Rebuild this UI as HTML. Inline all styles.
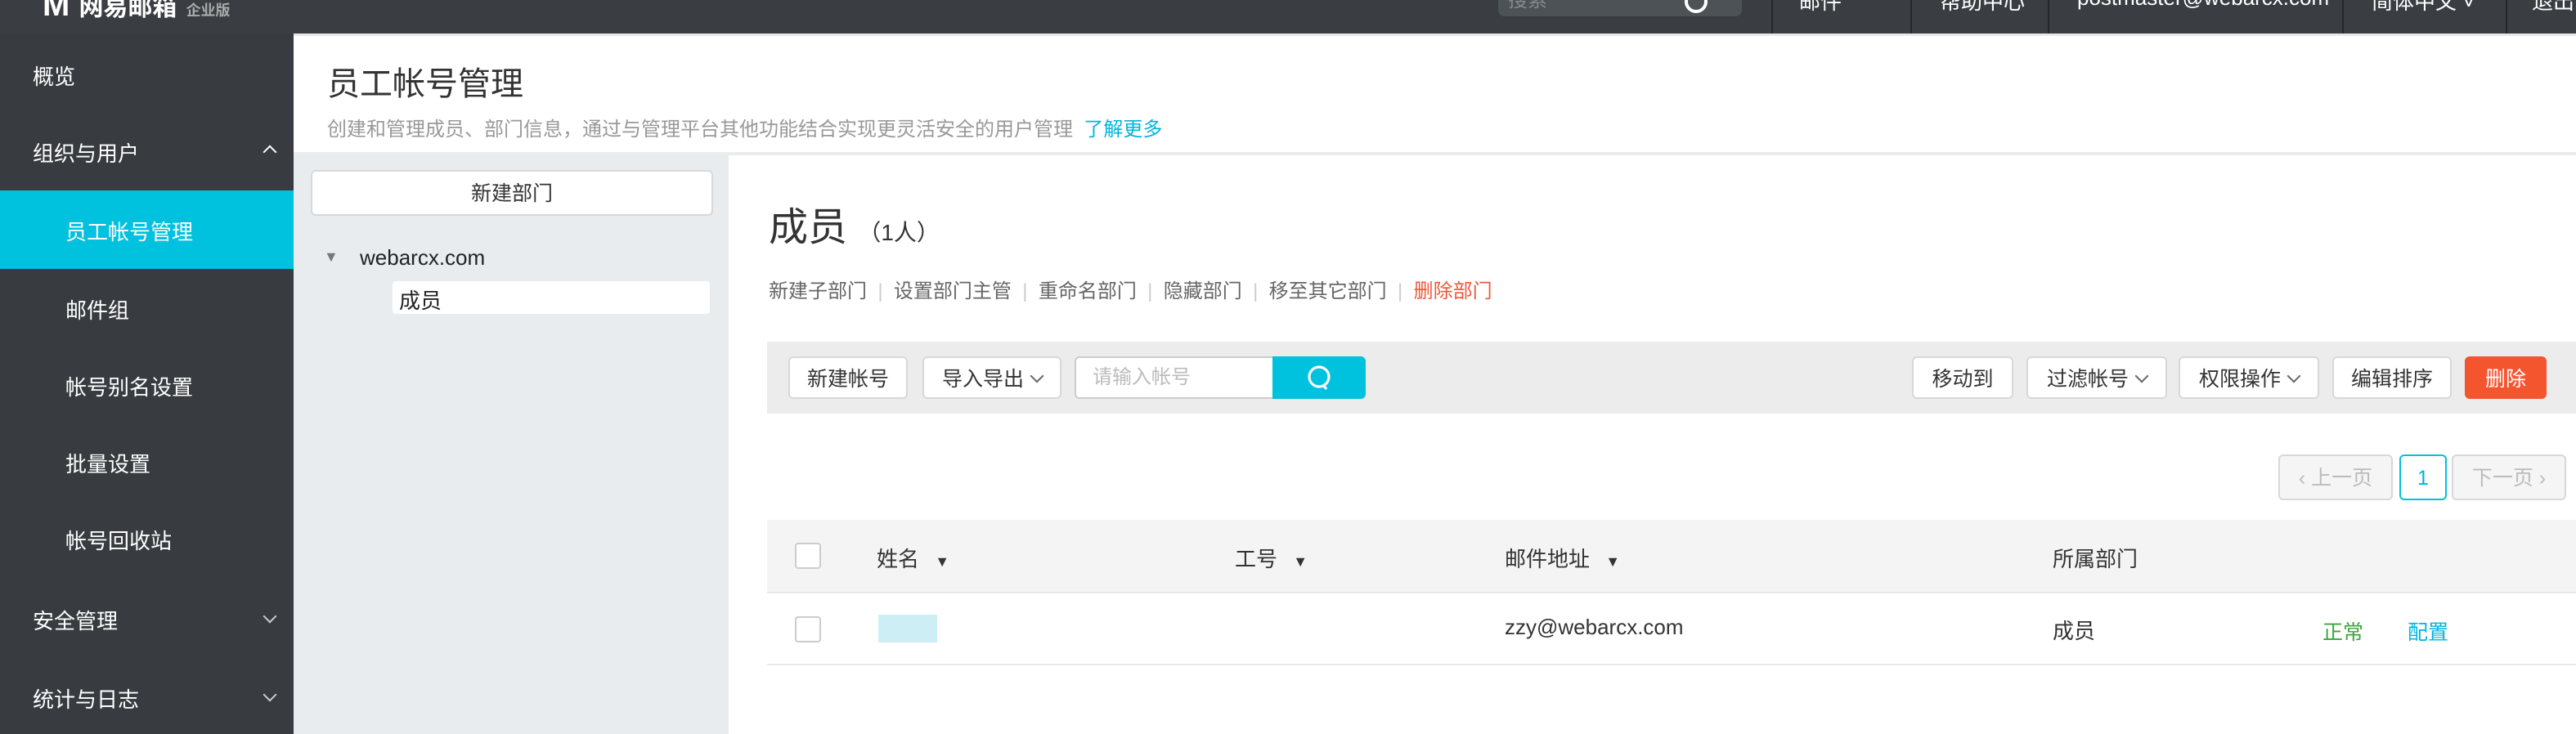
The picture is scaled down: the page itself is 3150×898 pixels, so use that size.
<!DOCTYPE html>
<html><head><meta charset="utf-8"><style>
html,body{margin:0;padding:0;width:3150px;height:898px;overflow:hidden;background:#fff}
#w{zoom:2;width:1575px;height:449px;position:relative;font-family:"Liberation Sans","Noto Sans CJK SC",sans-serif;font-size:13px;color:#333;overflow:hidden}
.a{position:absolute;white-space:nowrap}
.top{left:0;top:0;width:1575px;height:20.5px;background:#3a3e42}
.sep{top:0;width:1px;height:20.5px;background:#25282b}
.tt{color:#fff;top:-9px;font-size:13px}
.side{left:0;top:20.5px;width:179.5px;height:430px;background:#383c40}
.si{color:#fff;font-size:13px;left:20px}
.sub{left:40px}
.btn{background:#fff;border:1px solid #d8d8d8;border-radius:3px;height:26px;line-height:26px;text-align:center;font-size:12.5px;color:#333;box-sizing:border-box}
.chev{display:inline-block;width:5px;height:5px;border-right:1px solid #666;border-bottom:1px solid #666;transform:rotate(45deg);margin-left:5px;position:relative;top:-3px}
</style></head><body><div id="w">
<div class="a top"></div>
<div class="a" style="left:26px;top:-8px;color:#fff;font-size:20px;font-weight:bold">M <span style="font-size:15px">网易邮箱</span> <span style="font-size:9px;color:#aaa">企业版</span></div>
<div class="a" style="left:916px;top:0;width:149px;height:10px;background:#4c5256;border-radius:0 0 4px 4px"></div>
<div class="a" style="left:922px;top:-10px;color:#888;font-size:12px">搜索</div>
<div class="a" style="left:1030px;top:-6px;width:10px;height:10px;border:2px solid #fff;border-radius:50%"></div>
<div class="a sep" style="left:1083px"></div><div class="a sep" style="left:1168px"></div><div class="a sep" style="left:1252px"></div><div class="a sep" style="left:1432px"></div><div class="a sep" style="left:1532px"></div>
<div class="a tt" style="left:1100px">邮件</div>
<div class="a tt" style="left:1186px">帮助中心</div>
<div class="a tt" style="left:1270px">postmaster@webarcx.com</div>
<div class="a tt" style="left:1450px">简体中文 ˅</div>
<div class="a tt" style="left:1548px">退出</div>
<div class="a" style="left:179.5px;top:20.5px;width:1400px;height:1.5px;background:#e8e9ea"></div>

<div class="a side"></div>
<div class="a si" style="top:37px">概览</div>
<div class="a si" style="top:84px">组织与用户</div>
<div class="a" style="left:162px;top:90px;width:5px;height:5px;border-left:1px solid #fff;border-top:1px solid #fff;transform:rotate(45deg)"></div>
<div class="a" style="left:0;top:116.5px;width:179.5px;height:48px;background:#00c1de"></div>
<div class="a si sub" style="top:132px">员工帐号管理</div>
<div class="a si sub" style="top:180px">邮件组</div>
<div class="a si sub" style="top:227px">帐号别名设置</div>
<div class="a si sub" style="top:274px">批量设置</div>
<div class="a si sub" style="top:321px">帐号回收站</div>
<div class="a si" style="top:370px">安全管理</div>
<div class="a" style="left:162px;top:374px;width:5px;height:5px;border-right:1px solid #ccc;border-bottom:1px solid #ccc;transform:rotate(45deg)"></div>
<div class="a si" style="top:418px">统计与日志</div>
<div class="a" style="left:162px;top:422px;width:5px;height:5px;border-right:1px solid #ccc;border-bottom:1px solid #ccc;transform:rotate(45deg)"></div>

<div class="a" style="left:200px;top:35px;font-size:20px;color:#333">员工帐号管理</div>
<div class="a" style="left:200px;top:69px;font-size:12px;color:#999">创建和管理成员、部门信息，通过与管理平台其他功能结合实现更灵活安全的用户管理 <span style="color:#00b4dd">&nbsp;了解更多</span></div>
<div class="a" style="left:179.5px;top:93px;width:1400px;height:2px;background:#ebecec"></div>
<div class="a" style="left:179.5px;top:95px;width:266px;height:360px;background:#e9ecef"></div>
<div class="a btn" style="left:190px;top:104px;width:246px;height:28px;line-height:27px">新建部门</div>
<div class="a" style="left:198px;top:152px;font-size:9px;color:#777">▼</div>
<div class="a" style="left:220px;top:150px;font-size:13px;color:#222">webarcx.com</div>
<div class="a" style="left:240px;top:172px;width:194px;height:20px;background:#fff;border-radius:2px"></div>
<div class="a" style="left:244px;top:174px;font-size:13px;color:#222">成员</div>

<div class="a" style="left:470px;top:119px;font-size:24px;color:#333">成员 <span style="font-size:14px">（1人）</span></div>
<div class="a" style="left:470px;top:168px;font-size:12px;color:#666">新建子部门 <span style="color:#ccc">&nbsp;|&nbsp;</span> 设置部门主管 <span style="color:#ccc">&nbsp;|&nbsp;</span> 重命名部门 <span style="color:#ccc">&nbsp;|&nbsp;</span> 隐藏部门 <span style="color:#ccc">&nbsp;|&nbsp;</span> 移至其它部门 <span style="color:#ccc">&nbsp;|&nbsp;</span> <span style="color:#f0573a">删除部门</span></div>

<div class="a" style="left:469px;top:209px;width:1110px;height:44px;background:#ebeceb"></div>
<div class="a btn" style="left:482px;top:218px;width:73px">新建帐号</div>
<div class="a btn" style="left:564px;top:218px;width:85px">导入导出<span class="chev"></span></div>
<div class="a" style="left:657px;top:218px;width:122px;height:26px;background:#fff;border:1px solid #ccc;border-radius:3px 0 0 3px;box-sizing:border-box;color:#bbb;font-size:12px;line-height:24px;padding-left:10px">请输入帐号</div>
<div class="a" style="left:778px;top:218px;width:57px;height:26px;background:#00c1de;border-radius:0 3px 3px 0"></div>
<svg class="a" style="left:798px;top:222px" width="18" height="18" viewBox="0 0 18 18"><circle cx="8.5" cy="8.5" r="6" fill="none" stroke="#fff" stroke-width="1.6"/><path d="M11 13.5 L13 16" stroke="#fff" stroke-width="1.6"/></svg>
<div class="a btn" style="left:1169px;top:218px;width:62px">移动到</div>
<div class="a btn" style="left:1239px;top:218px;width:86px">过滤帐号<span class="chev"></span></div>
<div class="a btn" style="left:1332px;top:218px;width:86px">权限操作<span class="chev"></span></div>
<div class="a btn" style="left:1426px;top:218px;width:73px">编辑排序</div>
<div class="a btn" style="left:1507px;top:218px;width:50px;background:#f4552f;border-color:#f4552f;color:#fff">删除</div>

<div class="a btn" style="left:1393px;top:278px;width:70px;height:28px;line-height:27px;background:#f5f5f5;color:#bbb">‹ 上一页</div>
<div class="a btn" style="left:1467px;top:278px;width:29px;height:28px;line-height:27px;border-color:#00c1de;color:#00b4dd">1</div>
<div class="a btn" style="left:1499px;top:278px;width:70px;height:28px;line-height:27px;background:#f5f5f5;color:#bbb">下一页 ›</div>

<div class="a" style="left:469px;top:318px;width:1110px;height:44px;background:#f4f4f4;border-bottom:1px solid #e8e8e8"></div>
<div class="a" style="left:486px;top:332px;width:14px;height:14px;border:1px solid #ccc;background:#fff;border-radius:2px"></div>
<div class="a" style="left:536px;top:332px">姓名 <span style="font-size:9px;margin-left:6px">▼</span></div>
<div class="a" style="left:755px;top:332px">工号 <span style="font-size:9px;margin-left:6px">▼</span></div>
<div class="a" style="left:920px;top:332px">邮件地址 <span style="font-size:9px;margin-left:6px">▼</span></div>
<div class="a" style="left:1255px;top:332px">所属部门</div>
<div class="a" style="left:469px;top:406px;width:1110px;height:1px;background:#e8e8e8"></div>
<div class="a" style="left:486px;top:377px;width:14px;height:14px;border:1px solid #ccc;background:#fff;border-radius:2px"></div>
<div class="a" style="left:537px;top:376px;width:36px;height:17px;background:#cdeef5"></div>
<div class="a" style="left:920px;top:376px">zzy@webarcx.com</div>
<div class="a" style="left:1255px;top:376px">成员</div>
<div class="a" style="left:1420px;top:377px;color:#3aa63a;font-size:12.5px">正常</div>
<div class="a" style="left:1472px;top:377px;color:#00b4dd;font-size:12.5px">配置</div>
</div></body></html>
